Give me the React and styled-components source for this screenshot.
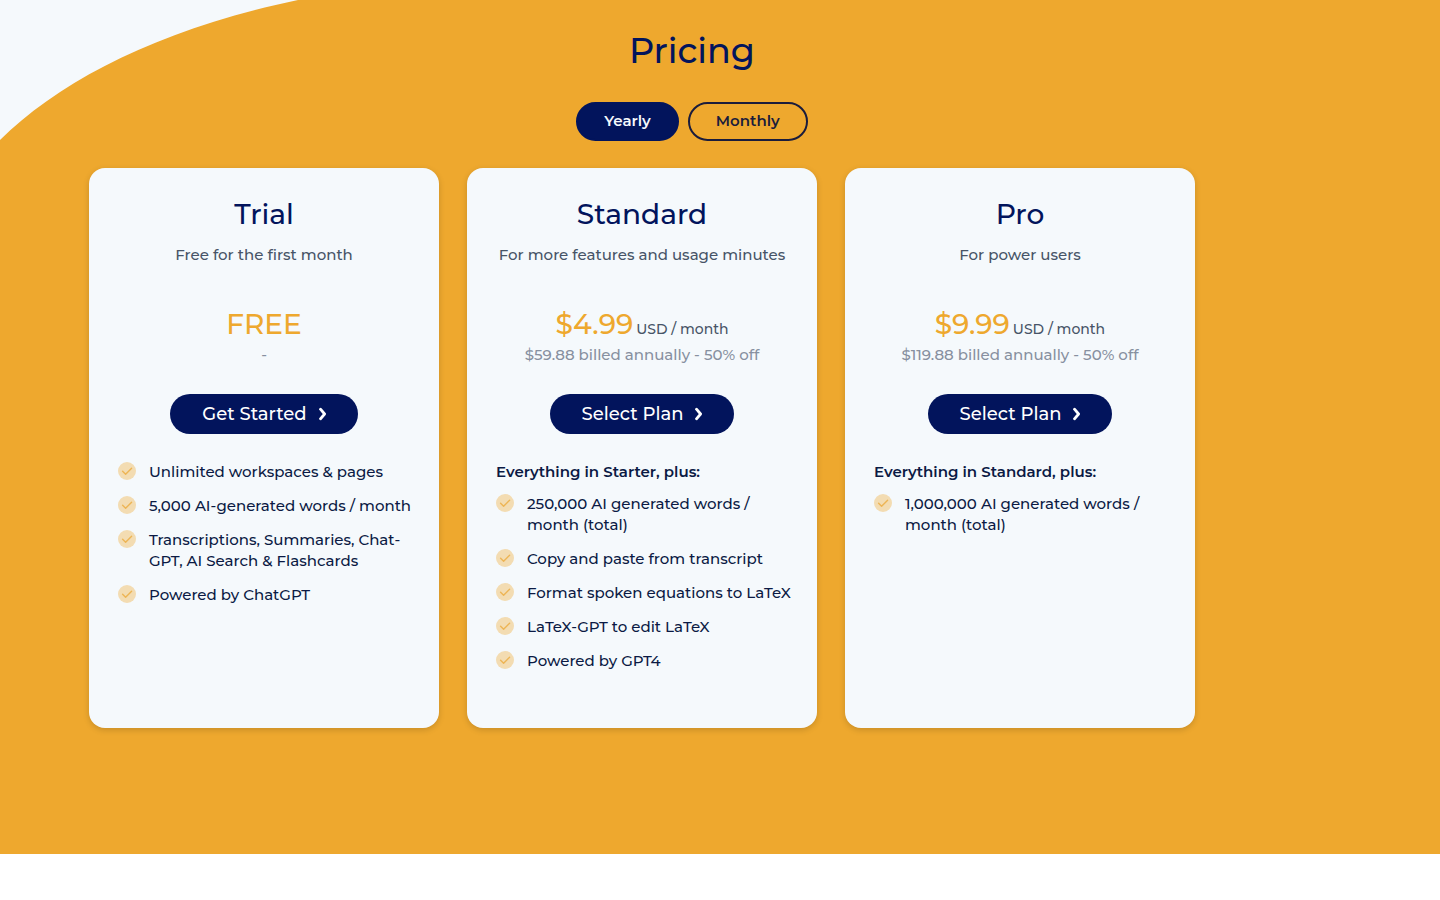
import React, { useState } from "react";
import styled, { createGlobalStyle } from "styled-components";

const GlobalStyle = createGlobalStyle`
  *, *::before, *::after {
    box-sizing: border-box;
  }
  body {
    margin: 0;
    background: #ffffff;
    font-family: Montserrat, Inter, "Open Sans", sans-serif;
    color: #02145c;
  }
`;

const Section = styled.section`
  position: relative;
  padding: 25px 145px 126px 89px;
  background: #eea82e;
`;

const Corner = styled.svg`
  position: absolute;
  top: 0;
  left: 0;
`;

const Header = styled.header`
  position: relative;
  display: flex;
  flex-direction: column;
  align-items: center;
  gap: 25px;
  margin-bottom: 27px;
`;

const Title = styled.h1`
  margin: 0;
  font-size: 35px;
  line-height: 52px;
  font-weight: 500;
`;

const Toggle = styled.div`
  display: flex;
  gap: 9px;
`;

const ToggleButton = styled.button`
  height: 39px;
  padding: 0 26px 2px;
  border: 2px solid ${(p) => (p.$active ? "#02145c" : "#1a1c3c")};
  border-radius: 20px;
  background: ${(p) => (p.$active ? "#02145c" : "transparent")};
  color: ${(p) => (p.$active ? "#f5f9fc" : "#1a1c3c")};
  font-family: inherit;
  font-size: 15px;
  font-weight: 600;
  cursor: pointer;
`;

const Plans = styled.div`
  position: relative;
  display: flex;
  flex-wrap: wrap;
  gap: 28px;
`;

const Card = styled.article`
  display: flex;
  flex-direction: column;
  align-items: center;
  flex: 0 1 350px;
  min-height: 560px;
  padding: 28px 20px;
  border-radius: 16px;
  background: #f5f9fc;
  box-shadow: 0 2px 6px rgba(0, 0, 0, 0.16);
`;

const PlanName = styled.h2`
  margin: 0;
  font-size: 28px;
  line-height: 36px;
  font-weight: 500;
`;

const Tagline = styled.p`
  margin: 12px 0 40px;
  font-size: 15px;
  line-height: 22px;
  font-weight: 500;
  color: #475467;
  white-space: nowrap;
`;

const Price = styled.p`
  margin: 0;
  line-height: 36px;
  font-size: 28px;
  font-weight: 500;
  color: #eea82e;
`;

const Unit = styled.span`
  margin-left: 3px;
  font-size: 14px;
  line-height: 1;
  color: #475467;
`;

const Billing = styled.p`
  margin: 2px 0 28px;
  font-size: 15px;
  line-height: 22px;
  font-weight: 500;
  color: #8790a0;
`;

const SelectButton = styled.button`
  display: flex;
  align-items: center;
  gap: 12px;
  height: 40px;
  padding: 0 32px;
  border: 0;
  border-radius: 20px;
  background: #02145c;
  color: #ffffff;
  font-family: inherit;
  font-size: 18px;
  font-weight: 500;
  cursor: pointer;
`;

const Details = styled.div`
  align-self: stretch;
  margin-top: 27px;
  padding-left: 9px;
  color: #0b1a44;
`;

const Includes = styled.p`
  margin: 0 0 10px;
  font-size: 15px;
  line-height: 22px;
  font-weight: 600;
`;

const Features = styled.ul`
  display: flex;
  flex-direction: column;
  gap: 13px;
  margin: 0;
  padding: 0;
  list-style: none;
`;

const Feature = styled.li`
  display: flex;
  align-items: flex-start;
  gap: 13px;
  font-size: 15px;
  line-height: 21px;
  font-weight: 500;

  svg {
    flex: none;
    margin-top: 1px;
  }
`;

const plans = [
  {
    name: "Trial",
    tagline: "Free for the first month",
    price: "FREE",
    billing: "-",
    action: "Get Started",
    features: [
      "Unlimited workspaces & pages",
      "5,000 AI-generated words / month",
      "Transcriptions, Summaries, Chat-GPT, AI Search & Flashcards",
      "Powered by ChatGPT",
    ],
  },
  {
    name: "Standard",
    tagline: "For more features and usage minutes",
    price: "$4.99",
    unit: "USD / month",
    billing: "$59.88 billed annually - 50% off",
    action: "Select Plan",
    includes: "Everything in Starter, plus:",
    features: [
      "250,000 AI generated words / month (total)",
      "Copy and paste from transcript",
      "Format spoken equations to LaTeX",
      "LaTeX-GPT to edit LaTeX",
      "Powered by GPT4",
    ],
  },
  {
    name: "Pro",
    tagline: "For power users",
    price: "$9.99",
    unit: "USD / month",
    billing: "$119.88 billed annually - 50% off",
    action: "Select Plan",
    includes: "Everything in Standard, plus:",
    features: ["1,000,000 AI generated words / month (total)"],
  },
];

function CheckIcon() {
  return (
    <svg width="18" height="18" viewBox="0 0 18 18" fill="none" aria-hidden="true">
      <circle cx="9" cy="9" r="9" fill="#f3dcb2" />
      <path
        d="M4.6 9.3 7.6 12.2 13.6 6.2"
        stroke="#edb555"
        strokeWidth="1.4"
        strokeLinecap="round"
        strokeLinejoin="round"
      />
    </svg>
  );
}

function ChevronIcon() {
  return (
    <svg width="7" height="14" viewBox="0 0 7 14" fill="none" aria-hidden="true">
      <path
        d="M1.5 2.2 5.6 7 1.5 11.8"
        stroke="currentColor"
        strokeWidth="2.8"
        strokeLinecap="round"
        strokeLinejoin="round"
      />
    </svg>
  );
}

function PlanCard({ plan }) {
  return (
    <Card>
      <PlanName>{plan.name}</PlanName>
      <Tagline>{plan.tagline}</Tagline>
      <Price>
        {plan.price}
        {plan.unit && <Unit>{plan.unit}</Unit>}
      </Price>
      <Billing>{plan.billing}</Billing>
      <SelectButton type="button">
        {plan.action}
        <ChevronIcon />
      </SelectButton>
      <Details>
        {plan.includes && <Includes>{plan.includes}</Includes>}
        <Features>
          {plan.features.map((feature) => (
            <Feature key={feature}>
              <CheckIcon />
              <span>{feature}</span>
            </Feature>
          ))}
        </Features>
      </Details>
    </Card>
  );
}

export default function App() {
  const [period, setPeriod] = useState("Yearly");

  return (
    <>
      <GlobalStyle />
      <Section id="pricing">
        <Corner width="298" height="140" viewBox="0 0 298 140" aria-hidden="true">
          <path d="M0 0H298C160 29 61 80 0 140Z" fill="#f5f9fc" />
        </Corner>
        <Header>
          <Title>Pricing</Title>
          <Toggle>
            {["Yearly", "Monthly"].map((name) => (
              <ToggleButton
                key={name}
                type="button"
                $active={period === name}
                aria-pressed={period === name}
                onClick={() => setPeriod(name)}
              >
                {name}
              </ToggleButton>
            ))}
          </Toggle>
        </Header>
        <Plans>
          {plans.map((plan) => (
            <PlanCard key={plan.name} plan={plan} />
          ))}
        </Plans>
      </Section>
    </>
  );
}
